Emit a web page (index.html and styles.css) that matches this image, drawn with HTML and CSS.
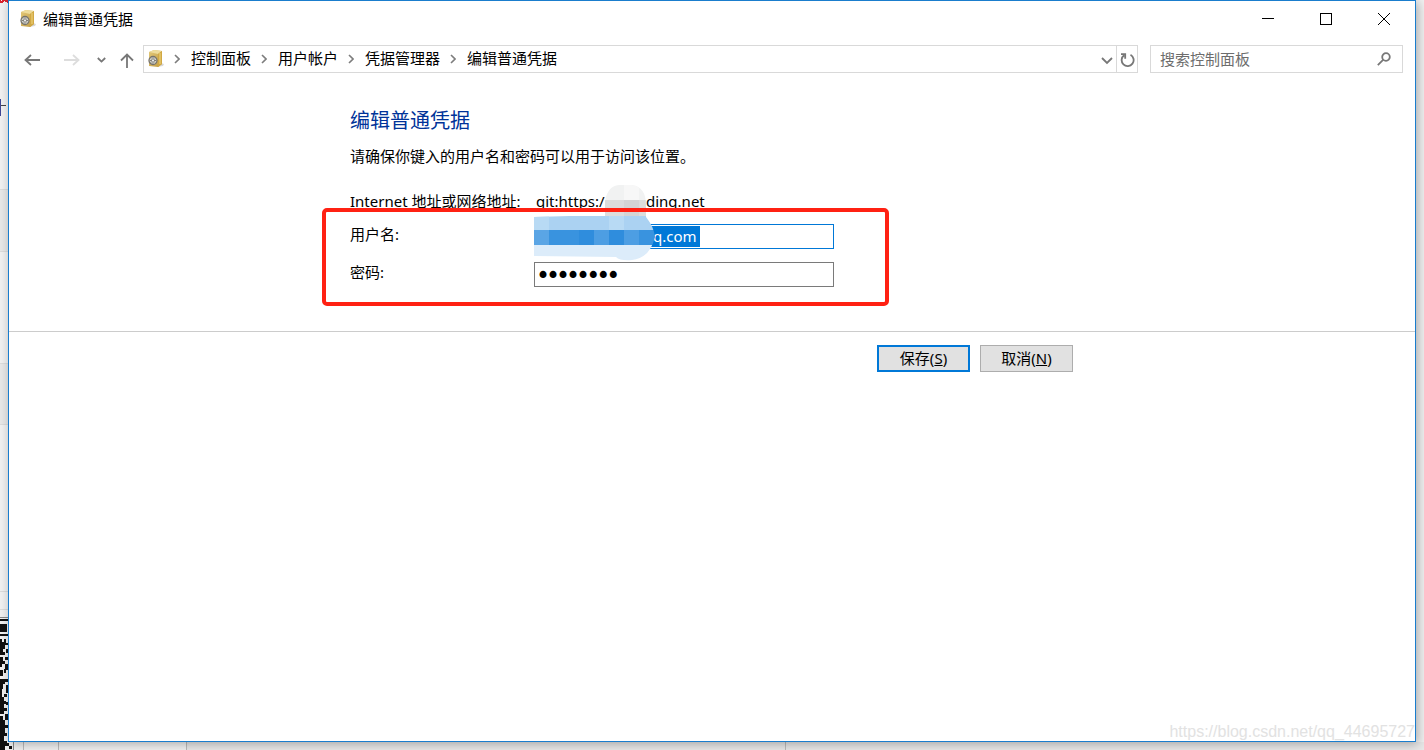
FILE: index.html
```html
<!DOCTYPE html>
<html lang="zh-CN">
<head>
<meta charset="utf-8">
<title>编辑普通凭据</title>
<link rel="stylesheet" href="styles.css">
</head>
<body>
<svg width="0" height="0" class="defs" aria-hidden="true">
  <defs>
    <linearGradient id="gold" x1="0" y1="0" x2="1" y2="1"><stop offset="0" stop-color="#e3c878"/><stop offset="1" stop-color="#c09a41"/></linearGradient>
    <symbol id="safe" viewBox="0 0 16 18">
      <path d="M9 17l6-1 1-2-3-1z" fill="#d8d8d8"/>
      <path d="M1 2L6 0l8 1v13l-4 3-9-1z" fill="url(#gold)"/>
      <path d="M1 2l5-2 8 1-4 3z" fill="#eedc9c"/>
      <path d="M10 4l4-3v13l-4 3z" fill="#d1a843"/>
      <path d="M12 3v11" stroke="#f0d682"/>
      <circle cx="5" cy="10.500" r="4" fill="#d6d6cf" stroke="#77736a" stroke-width="1.3"/>
      <path d="M5 7.500v6M2 10.500h6M3 8.500l4 4M7 8.500l-4 4" stroke="#68665f" stroke-width=".8"/>
      <circle cx="5" cy="10.500" r="1.1" fill="#eee"/>
    </symbol>
    <symbol id="sep" viewBox="0 0 6 10"><path d="M1 1l4 4-4 4" fill="none" stroke="#7d7d7d" stroke-width="1.6"/></symbol>
  </defs>
</svg>
<svg class="edge" width="24" height="750" shape-rendering="crispEdges" aria-hidden="true">
  <path fill="#e8e8e8" d="M0 190h8v61H0zM0 364h8v60H0z"/>
  <path fill="#dcdcdc" d="M0 189h8v1H0zM0 251h8v1H0zM0 363h8v1H0zM0 424h8v1H0zM0 591h8v1H0zM0 609h8v1H0z"/>
  <path d="M0 0c0 3 3 2 4 0M5 0l3 2" stroke="#d9232e" stroke-width="2" fill="none"/>
  <path fill="#3f4796" d="M0 99h1v17H0z"/><path fill="#444" d="M1 105h5v1H1z"/>
  <path fill="#888" d="M0 617h8v1H0zM13 742h1v8h-1z"/>
  <path fill="#111" d="M0 619h8v2H0zM0 624h7v8H0zM0 634h8v2H0zM0 639h2v3h2v-3h2v4h2v2H5v4H3v3h2v3H0zM6 649h2v4H6zM5 657h3v3H5zM0 657h3v4h2v3H2v3H0zM5 664h3v6H6v3H4v-4h1zM0 670h3v6H0zM0 679h8v3H5v2H3v5H2v8h2v4h2v3H0zM6 685h2v8H6zM4 694h3v3H4zM0 704h4v4h3v3H4v3H0zM6 702h2v3H6zM5 714h3v6H5zM0 716h3v4h2v5h3v3H5v5h2v3H4v5h3v2h2v3H5v6H0zM9 746h3v3H9z"/>
</svg>
<svg class="base" height="8" shape-rendering="crispEdges" aria-hidden="true">
  <path fill="#bbb" d="M23 0h1v8h-1zM58 0h1v8h-1zM186 0h1v8h-1zM785 0h1v8h-1z"/>
</svg>
<div class="window">
  <header class="titlebar">
    <svg class="safe"><use href="#safe"/></svg>
    <h1 class="caption">编辑普通凭据</h1>
    <button class="winbtn" aria-label="最小化"><svg width="12" height="12" shape-rendering="crispEdges"><path d="M0 5.5h12"/></svg></button>
    <button class="winbtn" aria-label="最大化"><svg width="12" height="12" shape-rendering="crispEdges"><path d="M.5.5h11v11H.5z"/></svg></button>
    <button class="winbtn" aria-label="关闭"><svg width="12" height="12"><path d="M0 0l12 12M12 0L0 12"/></svg></button>
  </header>
  <nav class="toolbar">
    <button class="tool back" aria-label="后退"><svg width="16" height="12"><path d="M16 6H1.500M7 1L1.500 6 7 11"/></svg></button>
    <button class="tool forward" aria-label="前进" disabled><svg width="16" height="12"><path d="M0 6h14.500M9 1l5.500 5L9 11"/></svg></button>
    <button class="tool recent" aria-label="最近"><svg width="9" height="6"><path d="M.8 1l3.700 3.600L8.200 1"/></svg></button>
    <button class="tool up" aria-label="上移"><svg width="14" height="15"><path d="M7 15V1.500M1 7.500l6-6 6 6"/></svg></button>
    <div class="address">
      <svg class="safe"><use href="#safe"/></svg>
      <svg class="sep"><use href="#sep"/></svg><a href="#">控制面板</a>
      <svg class="sep"><use href="#sep"/></svg><a href="#">用户帐户</a>
      <svg class="sep"><use href="#sep"/></svg><a href="#">凭据管理器</a>
      <svg class="sep"><use href="#sep"/></svg><a href="#">编辑普通凭据</a>
      <button class="drop" aria-label="展开"><svg width="12" height="8"><path d="M1 1l5 5 5-5"/></svg></button>
      <button class="refresh" aria-label="刷新"><svg width="16" height="16"><path d="M11.500 2.800A6 6 0 1 1 5 3.300M2 2.200h4.200v4.500"/></svg></button>
    </div>
    <label class="search"><input type="search" placeholder="搜索控制面板" aria-label="搜索控制面板"><svg width="14" height="14"><circle cx="9" cy="5" r="3.800"/><path d="M6.300 7.700L.8 13.200"/></svg></label>
  </nav>
  <main>
    <section class="content">
      <h2>编辑普通凭据</h2>
      <p class="hint">请确保你键入的用户名和密码可以用于访问该位置。</p>
      <form id="cred" class="fields">
        <span class="line">Internet 地址或网络地址:</span>
        <span class="line url"><span class="scheme">git:https:/</span>ding.net</span>
        <label for="user">用户名:</label>
        <input id="user" class="box user" type="text" value="q.com">
        <label for="pass">密码:</label>
        <input id="pass" class="box pass" type="password" value="password">
        <svg class="mosaic" width="121" height="76" viewBox="0 0 121 76" aria-hidden="true">
          <defs><clipPath id="blob"><path d="M0 32L71 30V16Q74 0 86 0h12Q112 2 112 20v12Q120 42 121 52 116 73 98 75 86 76 82 72L0 71z"/></clipPath></defs>
          <g clip-path="url(#blob)" shape-rendering="crispEdges">
            <path fill="#f1f2f2" d="M71 0h42v15H71z"/><path fill="#f7f7f7" d="M90 0h15v15H90z"/>
            <path fill="#dcdcdc" d="M71 15h42v16H71z"/><path fill="#d4d4d4" d="M90 15h15v16H90z"/>
            <path fill="#abd2f2" d="M0 31h121v14H0z"/><path fill="#b8daf4" d="M0 31h15v14H0zM75 31h15v14H75z"/>
            <path fill="#3993df" d="M0 45h121v15H0z"/><path fill="#5aa5e5" d="M0 45h15v15H0z"/><path fill="#4d9ee3" d="M60 45h15v15H60zM90 45h15v15H90z"/><path fill="#2f8ddd" d="M45 45h15v15H45zM75 45h15v15H75z"/>
            <path fill="#dcecfa" d="M0 60h121v16H0z"/>
          </g>
        </svg>
        <span class="marker"></span>
      </form>
    </section>
    <footer class="actions">
      <button class="btn primary" form="cred">保存(<u>S</u>)</button>
      <button class="btn" type="button">取消(<u>N</u>)</button>
    </footer>
  </main>
  <span class="watermark">https://blog.csdn.net/qq_44695727</span>
</div>
</body>
</html>
```
FILE: styles.css
```css
* { box-sizing: border-box; }
body {
  margin: 0;
  padding: 0 8px 8px;
  min-height: 100vh;
  display: flex;
  background: #f1f1f1;
  color: #000;
  font: 15px/22px "Noto Sans", "Noto Sans CJK SC", sans-serif;
}
button, input { font: inherit; color: inherit; margin: 0; }
button { padding: 0; border: 0; background: none; }
svg { flex: none; }
.defs, .edge, .base { position: absolute; left: 0; }
.edge { top: 0; }
.base { bottom: 0; width: 100%; background: linear-gradient(90deg, transparent 186px, #e8e8e8 186px); }
.window {
  position: relative;
  flex: 1;
  display: flex;
  flex-direction: column;
  border: 1px solid #1a7dcd;
  background: #fff;
  box-shadow: 2px 2px 10px rgba(0, 0, 0, .3);
}
.titlebar { display: flex; align-items: center; height: 36px; padding: 0 2px 0 11px; }
.safe { width: 16px; height: 18px; }
.caption { flex: 1; margin: 0 0 0 7px; font-size: 15px; font-weight: 400; }
.winbtn { width: 58px; height: 36px; display: grid; place-items: center; }
.winbtn svg { fill: none; stroke: #000; }
.toolbar { display: flex; align-items: center; margin-top: 8px; padding: 0 12px 0 15px; }
.tool svg, .drop svg, .refresh svg, .search svg { display: block; fill: none; stroke: #777; stroke-width: 1.8; }
.tool { padding-top: 2px; }
.forward { margin-left: 24px; }
.tool.forward svg { stroke: #ddd; }
.recent { margin-left: 17px; }
.up { margin-left: 14px; }
.address { flex: 1; display: flex; align-items: center; height: 28px; margin-left: 9px; padding-left: 4px; border: 1px solid #d9d9d9; }
.address a { padding-bottom: 2px; color: #000; text-decoration: none; }
.sep { width: 6px; height: 10px; margin: 0 11px 0 10px; }
.drop { margin-left: auto; padding: 3px 3px 0; }
.refresh { height: 26px; padding: 1px 2px 0; border-left: 1px solid #d9d9d9; }
.search { display: flex; align-items: center; width: 253px; height: 28px; margin-left: 12px; padding: 0 11px 0 9px; border: 1px solid #d9d9d9; }
.search input { flex: 1; min-width: 0; padding: 0; border: 0; outline: 0; background: none; }
.search input::placeholder { color: #6d6d6d; opacity: 1; }
.content { padding: 34px 0 44px 341px; border-bottom: 1px solid #ccc; }
h2 { margin: 0; color: #003399; font-size: 20px; line-height: 28px; font-weight: 400; }
.hint { margin: 10px 0 23px; }
.fields { position: relative; display: grid; grid-template-columns: 184px 300px; row-gap: 13px; }
.fields label { line-height: 20px; }
.line { margin-bottom: -1px; white-space: nowrap; }
.url { padding-left: 2px; }
.scheme { display: inline-block; width: 110px; }
.box { height: 25px; width: 100%; border: 1px solid #7a7a7a; outline: 0; background: #fff; }
.user {
  padding: 0 0 2px 118px;
  border-color: #0078d7;
  color: #fff;
  background: linear-gradient(#0078d7, #0078d7) 2px 1px / 163px 21px no-repeat #fff;
}
.pass { padding: 0 3px; font: 17px/22px "DejaVu Sans", sans-serif; -webkit-text-stroke: 2px #000; }
.mosaic { position: absolute; left: 184px; top: -5px; }
.marker { position: absolute; left: -28px; top: 18px; width: 567px; height: 98px; border: 4px solid #ff2113; border-radius: 5px; }
.actions { display: flex; gap: 10px; padding: 13px 0 0 868px; }
.btn { width: 93px; height: 27px; padding-bottom: 2px; border: 1px solid #adadad; background: #e1e1e1; }
.btn.primary { border: 2px solid #0078d7; }
.watermark { position: absolute; right: 0; bottom: 0; color: #e2e2e2; font: 16px/18px "Liberation Sans", sans-serif; }
```
